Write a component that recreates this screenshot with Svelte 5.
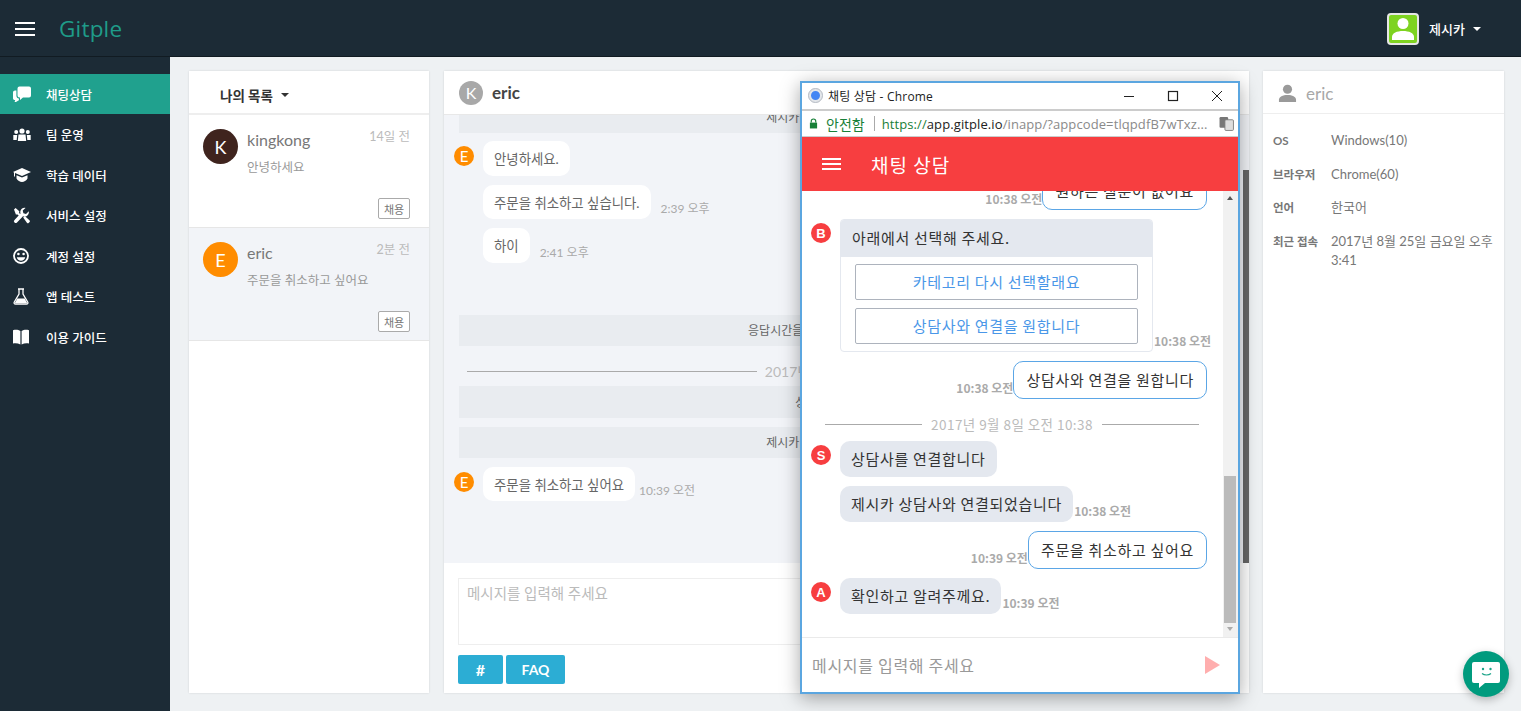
<script>
  const navItems = [
    { id: 'chat', label: '채팅상담' },
    { id: 'team', label: '팀 운영' },
    { id: 'learn', label: '학습 데이터' },
    { id: 'service', label: '서비스 설정' },
    { id: 'account', label: '계정 설정' },
    { id: 'test', label: '앱 테스트' },
    { id: 'guide', label: '이용 가이드' }
  ];

  const conversations = [
    { id: 'k', initial: 'K', name: 'kingkong', time: '14일 전', text: '안녕하세요', color: '#3f241e' },
    { id: 'e', initial: 'E', name: 'eric', time: '2분 전', text: '주문을 취소하고 싶어요', color: '#ff8c00', active: true }
  ];

  const details = [
    { label: 'OS', value: 'Windows(10)' },
    { label: '브라우저', value: 'Chrome(60)' },
    { label: '언어', value: '한국어' },
    { label: '최근 접속', value: '2017년 8월 25일 금요일 오후 3:41' }
  ];
</script>

<div class="page">
  <header class="topbar">
    <div class="brand">
      <span class="burger"><i></i><i></i><i></i></span>
      <span class="logo">Gitple</span>
    </div>
    <div class="me">
      <span class="me-pic">
        <svg viewBox="0 0 28 28" width="28" height="28"><circle cx="14" cy="8.5" r="5.5" fill="#fff"/><path d="M3 25v-3c0-4 5-6 11-6s11 2 11 6v3z" fill="#fff"/></svg>
      </span>
      <span class="me-name">제시카</span>
      <span class="caret light"></span>
    </div>
  </header>

  <div class="body">
    <nav class="sidebar">
      {#each navItems as item, i}
        <div class="nav-item" class:active={i === 0}>
          <span class="nav-icon">
            {#if item.id === 'chat'}
              <svg viewBox="0 0 18 16" width="18" height="16"><path d="M6.5 0.500h9.500a2 2 0 0 1 2 2v7a2 2 0 0 1-2 2H10l-3 2.500V11.500h-.5a2 2 0 0 1-2-2v-7a2 2 0 0 1 2-2z" fill="#fff"/><path d="M3.400 4.500v5.300c0 1.600 1.100 2.700 2.500 2.700v1.800l-2.900 1.700H1.600l.6-1.900H1.800C.8 14.100 0 13.300 0 12.300V6.500c0-1.100.9-2 2-2z" fill="#fff"/></svg>
            {:else if item.id === 'team'}
              <svg viewBox="0 0 18 14" width="18" height="14" fill="#fff"><circle cx="9" cy="3" r="2.600"/><path d="M5.500 6.500h7l.7 6.500H4.800z"/><circle cx="3.200" cy="4" r="2"/><path d="M.3 7h3.900l-.5 5H.3z"/><circle cx="14.800" cy="4" r="2"/><path d="M13.800 7h3.900v5h-3.400z"/></svg>
            {:else if item.id === 'learn'}
              <svg viewBox="0 0 18 14" width="18" height="14" fill="#fff"><path d="M9 0l9 4-9 4-7-3.100V8.500H1V4.400L0 4z"/><path d="M3.500 7.200L9 9.600l5.500-2.400v3.300C13.300 12.500 11 14 9 14s-4.300-1.500-5.500-3.500z"/></svg>
            {:else if item.id === 'service'}
              <svg viewBox="0 0 17 17" width="17" height="17" fill="#fff"><path d="M1.500 15.500a1.800 1.800 0 0 0 2.500 0l6-6.300c2.200.8 4.600-.2 5.500-2.300.4-.9.500-1.800.3-2.700l-2.800 2.700-2.600-.7-.7-2.600L12.500.9C10 .4 7.700 2 7.300 4.400c-.1.700 0 1.500.2 2.200l-6 6.300a1.800 1.800 0 0 0 0 2.600z"/><path d="M1 2.500L2.600 1l3.700 3.200-.2 1.800 2 2-1.500 1.500-2-2-1.700.1zM10.200 10.500l1.600-1.600 4.600 4.400a1.300 1.300 0 0 1 0 1.900l-.6.600a1.300 1.300 0 0 1-1.900 0z"/></svg>
            {:else if item.id === 'account'}
              <svg viewBox="0 0 16 16" width="16" height="16"><circle cx="8" cy="8" r="7" fill="none" stroke="#fff" stroke-width="1.800"/><circle cx="5.400" cy="6" r="1.300" fill="#fff"/><circle cx="10.600" cy="6" r="1.300" fill="#fff"/><path d="M3.800 9.200h8.400c-.3 2.200-2.100 3.600-4.200 3.600s-3.900-1.400-4.200-3.600z" fill="#fff"/></svg>
            {:else if item.id === 'test'}
              <svg viewBox="0 0 16 17" width="16" height="17"><path d="M5 1h6M6 1v5L1.300 14c-.6 1 0 2.200 1.200 2.200h11c1.200 0 1.800-1.200 1.200-2.200L10 6V1" fill="none" stroke="#fff" stroke-width="1.300"/><path d="M4.300 10.500h7.400l2.300 4.300c.2.400-.1.700-.5.700H2.500c-.4 0-.7-.3-.5-.7z" fill="#fff"/></svg>
            {:else}
              <svg viewBox="0 0 16 16" width="16" height="16" fill="#fff"><path d="M0 1.200C2.600.4 5.400.6 7.400 2v13.500C5.200 14.200 2.600 13.800 0 14.400z"/><path d="M16 1.200c-2.600-.8-5.400-.6-7.400.8v13.500c2.200-1.300 4.800-1.700 7.400-1.100z"/></svg>
            {/if}
          </span>
          <span>{item.label}</span>
        </div>
      {/each}
    </nav>

    <main class="content">
      <section class="card list">
        <div class="list-head">나의 목록 <span class="caret"></span></div>
        {#each conversations as c}
          <div class="conv" class:active={c.active}>
            <span class="conv-pic" style="background:{c.color}">{c.initial}</span>
            <div class="conv-main">
              <div class="conv-top">
                <span class="conv-name">{c.name}</span>
                <span class="conv-time">{c.time}</span>
              </div>
              <div class="conv-text">{c.text}</div>
              <div class="conv-foot"><span class="take">채용</span></div>
            </div>
          </div>
        {/each}
      </section>

      <section class="card chat">
        <div class="chat-head">
          <span class="head-pic">K</span>
          <span class="head-name">eric</span>
        </div>
        <div class="chat-log">
          <div class="band">제시카 상담사와 연결되었습니다</div>
          <div class="msg lead"><span class="dot">E</span><div class="bubble">안녕하세요.</div></div>
          <div class="msg"><div class="bubble">주문을 취소하고 싶습니다.</div><span class="stamp">2:39 오후</span></div>
          <div class="msg"><div class="bubble">하이</div><span class="stamp">2:41 오후</span></div>
          <div class="band timeout">응답시간을 초과해 상담사를 연결합니다</div>
          <div class="date-line"><i></i><span>2017년 9월 8일 오전 10:38</span><i></i></div>
          <div class="band">상담사를 연결합니다</div>
          <div class="band">제시카 상담사와 연결되었습니다</div>
          <div class="msg lead"><span class="dot">E</span><div class="bubble">주문을 취소하고 싶어요</div><span class="stamp tight">10:39 오전</span></div>
          <span class="log-scroll"></span>
        </div>
        <div class="composer">
          <div class="composer-box">메시지를 입력해 주세요</div>
          <div class="composer-btns">
            <span class="tool hash">#</span>
            <span class="tool faq">FAQ</span>
          </div>
        </div>
      </section>

      <section class="card info">
        <div class="info-head">
          <svg viewBox="0 0 20 20" width="19" height="19" fill="#9a9a9a"><circle cx="10" cy="5.500" r="4.800"/><path d="M1 19v-2.500c0-3 4-5 9-5s9 2 9 5V19z"/></svg>
          <span>eric</span>
        </div>
        <dl class="info-list">
          {#each details as d}
            <dt>{d.label}</dt>
            <dd>{d.value}</dd>
          {/each}
        </dl>
      </section>
    </main>
  </div>

  <!-- floating browser window -->
  <div class="popup">
    <div class="win-title">
      <span class="fav"></span>
      <span class="win-name">채팅 상담 - Chrome</span>
      <div class="win-ctrls">
        <svg viewBox="0 0 12 12" width="12" height="12"><path d="M1 6.500h10" stroke="#222" stroke-width="1"/></svg>
        <svg viewBox="0 0 12 12" width="12" height="12"><rect x="1.500" y="1.500" width="9" height="9" fill="none" stroke="#222" stroke-width="1.200"/></svg>
        <svg viewBox="0 0 12 12" width="12" height="12"><path d="M1 1l10 10M11 1L1 11" stroke="#222" stroke-width="1"/></svg>
      </div>
    </div>
    <div class="win-addr">
      <svg class="lock" viewBox="0 0 10 12" width="9" height="11"><path d="M2.500 5V3.500a2.500 2.500 0 0 1 5 0V5" fill="none" stroke="#188038" stroke-width="1.300"/><rect x="1" y="5" width="8" height="6.500" fill="#188038"/></svg>
      <span class="secure">안전함</span>
      <span class="addr-sep"></span>
      <span class="url"><b>https://</b><em>app.gitple.io</em>/inapp/?appcode=tlqpdfB7wTxz...</span>
      <svg class="translate" viewBox="0 0 14 14" width="15" height="15"><rect x="0.500" y="1" width="8" height="10" rx="1" fill="#777"/><rect x="5.500" y="3.500" width="8" height="10" rx="1" fill="#ddd" stroke="#777" stroke-width="0.800"/></svg>
    </div>
    <div class="bot-head">
      <span class="bot-burger"><i></i><i></i><i></i></span>
      <span class="bot-title">채팅 상담</span>
    </div>
    <div class="bot-main">
      <div class="bot-log">
        <div class="b-row mine"><span class="b-stamp">10:38 오전</span><div class="b-bubble out">원하는 질문이 없어요</div></div>

        <div class="b-row">
          <span class="b-dot">B</span>
          <div class="pick">
            <div class="pick-head">아래에서 선택해 주세요.</div>
            <div class="pick-body">
              <div class="pick-btn">카테고리 다시 선택할래요</div>
              <div class="pick-btn">상담사와 연결을 원합니다</div>
            </div>
          </div>
          <span class="b-stamp after">10:38 오전</span>
        </div>

        <div class="b-row mine"><span class="b-stamp">10:38 오전</span><div class="b-bubble out">상담사와 연결을 원합니다</div></div>

        <div class="b-date"><i></i><span>2017년 9월 8일 오전 10:38</span><i></i></div>

        <div class="b-row"><span class="b-dot">S</span><div class="b-bubble">상담사를 연결합니다</div></div>
        <div class="b-row"><div class="b-bubble">제시카 상담사와 연결되었습니다</div><span class="b-stamp after">10:38 오전</span></div>
        <div class="b-row mine"><span class="b-stamp">10:39 오전</span><div class="b-bubble out">주문을 취소하고 싶어요</div></div>
        <div class="b-row"><span class="b-dot">A</span><div class="b-bubble">확인하고 알려주께요.</div><span class="b-stamp after">10:39 오전</span></div>
      </div>
      <div class="bot-scroll">
        <span class="arrow up"></span>
        <span class="thumb"></span>
        <span class="arrow down"></span>
      </div>
    </div>
    <div class="bot-input">
      <span>메시지를 입력해 주세요</span>
      <span class="send"></span>
    </div>
  </div>

  <div class="fab">
    <svg viewBox="0 0 30 30" width="30" height="30">
      <path d="M3 2h24a2 2 0 0 1 2 2v17a2 2 0 0 1-2 2H14l-6 5v-5H3a2 2 0 0 1-2-2V4a2 2 0 0 1 2-2z" fill="#fff"/>
      <circle cx="12" cy="9" r="1.200" fill="#1aa388"/>
      <circle cx="19.500" cy="9" r="1.200" fill="#1aa388"/>
      <path d="M11 13.500c2.500 2 6.500 2 9 0" fill="none" stroke="#1aa388" stroke-width="1.200"/>
    </svg>
  </div>
</div>

<style>
  :global(body) {
    margin: 0;
    background: #eef1f3;
  }

  .page {
    position: relative;
    width: 1521px;
    height: 711px;
    overflow: hidden;
    display: flex;
    flex-direction: column;
    font-family: Lato, "Noto Sans CJK KR", sans-serif;
    color: #777;
    background: #eef1f3;
  }

  .topbar {
    height: 56px;
    flex-shrink: 0;
    display: flex;
    align-items: center;
    justify-content: space-between;
    background: #1c2b36;
    border-bottom: 1px solid #111b22;
  }

  .brand {
    display: flex;
    align-items: center;
    padding-left: 15px;
  }

  .burger {
    display: flex;
    flex-direction: column;
    gap: 4px;
    width: 20px;
    margin-top: 2px;
  }

  .burger i {
    display: block;
    height: 2px;
    background: #fff;
  }

  .logo {
    margin-left: 24px;
    font-size: 22.500px;
    color: #1f9c89;
    font-family: "Open Sans", sans-serif;
    letter-spacing: 0.2px;
  }

  .me {
    display: flex;
    align-items: center;
    padding-right: 40px;
    padding-top: 1px;
  }

  .me-pic {
    width: 28px;
    height: 28px;
    border: 2px solid #e6e6e6;
    border-radius: 4px;
    background: #7ed321;
    overflow: hidden;
    display: flex;
  }

  .me-name {
    margin-left: 10px;
    font-size: 13px;
    font-weight: 500;
    color: #fff;
  }

  .caret {
    display: inline-block;
    width: 0;
    height: 0;
    margin-left: 4px;
    vertical-align: middle;
    border-left: 4px solid transparent;
    border-right: 4px solid transparent;
    border-top: 4px solid #333;
  }

  .caret.light {
    margin-left: 8px;
    border-top-color: #fff;
  }

  .body {
    flex: 1;
    min-height: 0;
    display: flex;
  }

  .sidebar {
    width: 170px;
    flex-shrink: 0;
    padding-top: 17px;
    box-sizing: border-box;
    background: #1c2b36;
  }

  .nav-item {
    height: 40.500px;
    display: flex;
    align-items: center;
    font-size: 12.500px;
    font-weight: 500;
    color: #fff;
  }

  .nav-item.active {
    height: 40px;
    margin-bottom: 0.500px;
    background: #20a18e;
  }

  .nav-icon {
    width: 46px;
    padding-left: 13px;
    box-sizing: border-box;
    display: flex;
    align-items: center;
  }

  .content {
    flex: 1;
    min-width: 0;
    display: flex;
    gap: 14px;
    padding: 14px 17px 18px 19px;
  }

  .card {
    background: #fff;
    box-shadow: 0 0 2px rgba(0, 0, 0, 0.12);
    display: flex;
    flex-direction: column;
    min-height: 0;
  }

  .list {
    width: 240px;
    margin-right: 1px;
    flex-shrink: 0;
  }

  .list-head {
    height: 37px;
    padding-top: 5px;
    flex-shrink: 0;
    display: flex;
    align-items: center;
    padding-left: 31px;
    gap: 4px;
    font-size: 13.500px;
    font-weight: 700;
    color: #333;
    border-bottom: 2px solid #eee;
  }

  .conv {
    height: 112px;
    flex-shrink: 0;
    display: flex;
    padding: 0 19px 0 14px;
    border-bottom: 1px solid #e6e6e6;
  }

  .conv.active {
    background: #f2f4f8;
  }

  .conv-pic {
    width: 35px;
    height: 35px;
    margin-top: 14px;
    border-radius: 50%;
    flex-shrink: 0;
    display: flex;
    align-items: center;
    justify-content: center;
    font-size: 18px;
    color: #fff;
  }

  .conv-main {
    flex: 1;
    min-width: 0;
    margin-left: 9px;
    display: flex;
    flex-direction: column;
  }

  .conv-top {
    display: flex;
    justify-content: space-between;
    margin-top: 14px;
  }

  .conv-name {
    font-size: 16px;
    line-height: 22px;
    color: #777;
  }

  .conv-time {
    font-size: 12.500px;
    line-height: 15px;
    color: #bbb;
  }

  .conv-text {
    margin-top: 7px;
    font-size: 12.500px;
    line-height: 19px;
    color: #999;
  }

  .conv-foot {
    margin-top: 21px;
    display: flex;
    justify-content: flex-end;
  }

  .take {
    width: 30px;
    height: 19px;
    display: flex;
    align-items: center;
    justify-content: center;
    border: 1px solid #aaa;
    border-radius: 2px;
    background: #fff;
    font-size: 11px;
    color: #777;
  }

  .chat {
    flex: 1;
    min-width: 0;
  }

  .chat-head {
    height: 43px;
    flex-shrink: 0;
    display: flex;
    align-items: center;
    gap: 9px;
    padding-left: 15px;
    border-bottom: 1px solid #e8e8e8;
    box-shadow: 0 1px 1px rgba(0, 0, 0, 0.04);
    position: relative;
  }

  .head-pic {
    width: 24px;
    height: 24px;
    border-radius: 50%;
    background: #a8a8a8;
    color: #fff;
    display: flex;
    align-items: center;
    justify-content: center;
    font-size: 16px;
  }

  .head-name {
    font-size: 17px;
    font-weight: 700;
    color: #444;
  }

  .chat-log {
    position: relative;
    flex: 1;
    min-height: 0;
    overflow: hidden;
    display: flex;
    flex-direction: column;
    justify-content: flex-end;
    padding-bottom: 62px;
    background: #f2f4f8;
  }

  .band {
    flex-shrink: 0;
    height: 31.500px;
    padding-bottom: 1px;
    box-sizing: border-box;
    margin: 9px 15px 0;
    display: flex;
    align-items: center;
    justify-content: center;
    background: #e9ecf0;
    font-size: 12px;
    color: #666;
  }

  .band.timeout {
    margin-top: 52px;
  }

  .msg {
    flex-shrink: 0;
    display: flex;
    align-items: flex-end;
    margin: 9px 0 0 39px;
  }

  .band + .msg {
    margin-top: 8.500px;
  }

  .msg.lead {
    position: relative;
  }

  .dot {
    position: absolute;
    left: -29px;
    top: 5px;
    width: 20px;
    height: 20px;
    border-radius: 50%;
    background: #ff8c00;
    color: #fff;
    font-size: 15px;
    display: flex;
    align-items: center;
    justify-content: center;
  }

  .bubble {
    height: 34.500px;
    display: flex;
    align-items: center;
    padding: 0 11px;
    border-radius: 10px;
    background: #fff;
    font-size: 13.400px;
    color: #666;
  }

  .stamp {
    margin: 0 0 3px 10px;
    font-size: 12px;
    color: #aaa;
  }

  .stamp.tight {
    margin-left: 4px;
  }

  .date-line {
    flex-shrink: 0;
    display: flex;
    align-items: center;
    gap: 8px;
    height: 20px;
    margin: 15px 23px 0;
    font-size: 14px;
    color: #bbb;
  }

  .date-line i {
    flex: 1;
    height: 1px;
    background: #aaa;
  }

  .date-line + .band {
    margin-top: 5px;
  }

  .log-scroll {
    position: absolute;
    right: 0;
    top: 55px;
    bottom: 0;
    width: 6px;
    background: #666;
  }

  .composer {
    height: 130px;
    flex-shrink: 0;
    padding: 15px 15px 0 14px;
    box-sizing: border-box;
  }

  .composer-box {
    height: 67px;
    box-sizing: border-box;
    padding: 3px 8px;
    border: 1px solid #eee;
    font-size: 14.500px;
    color: #bbb;
  }

  .composer-btns {
    display: flex;
    gap: 3px;
    margin-top: 10px;
  }

  .tool {
    height: 29px;
    display: flex;
    align-items: center;
    justify-content: center;
    border-radius: 2px;
    background: #2cadd4;
    color: #fff;
    font-size: 14px;
    font-weight: 700;
  }

  .hash {
    width: 45px;
    font-size: 16px;
  }

  .faq {
    width: 59px;
  }

  .info {
    width: 241px;
    flex-shrink: 0;
  }

  .info-head {
    height: 40px;
    padding-top: 2px;
    flex-shrink: 0;
    display: flex;
    align-items: center;
    gap: 9px;
    padding-left: 15px;
    border-bottom: 1px solid #eee;
    font-size: 17px;
    color: #a8a8a8;
  }

  .info-list {
    margin: 17px 0 0;
    padding: 0 10px;
    display: grid;
    grid-template-columns: 58px 1fr;
    row-gap: 14.500px;
    font-size: 13px;
    line-height: 19px;
  }

  dt {
    font-size: 11.500px;
    font-weight: 700;
    color: #777;
  }

  dd {
    margin: 0;
    color: #777;
  }

  /* popup browser window */
  .popup {
    position: absolute;
    left: 800px;
    top: 81px;
    width: 440px;
    height: 613px;
    box-sizing: border-box;
    border: 2px solid #5ba6e0;
    background: #fff;
    box-shadow: 0 4px 18px rgba(0, 0, 0, 0.35);
    display: flex;
    flex-direction: column;
    font-family: "Noto Sans CJK KR", sans-serif;
  }

  .win-title {
    height: 25px;
    padding-bottom: 1px;
    flex-shrink: 0;
    display: flex;
    align-items: center;
    padding-left: 6px;
    font-size: 12px;
    color: #222;
    border-bottom: 2px solid #ccc;
  }

  .fav {
    width: 9px;
    height: 9px;
    border: 3px solid #e3e6ea;
    border-radius: 50%;
    background: #4285f4;
    outline: 1px solid #b9bec6;
    outline-offset: -1px;
  }

  .win-name {
    margin-left: 5px;
    letter-spacing: 0.2px;
    font-family: "Open Sans", "Noto Sans CJK KR", sans-serif;
  }

  .win-ctrls {
    margin-left: auto;
    display: flex;
    gap: 32px;
    padding-right: 15px;
  }

  .win-addr {
    height: 25px;
    flex-shrink: 0;
    display: flex;
    align-items: center;
    padding-left: 7px;
    border-bottom: 1px solid #ccc;
    font-family: "Open Sans", "Noto Sans CJK KR", sans-serif;
    white-space: nowrap;
    overflow: hidden;
  }

  .secure {
    margin-left: 8px;
    font-size: 14px;
    color: #188038;
  }

  .addr-sep {
    width: 1px;
    height: 15px;
    margin: 0 7px 0 9px;
    background: #aaa;
  }

  .url {
    color: #8a8a8a;
    font-size: 13px;
    letter-spacing: 0.1px;
  }

  .url b {
    font-weight: 400;
    color: #188038;
  }

  .url em {
    font-style: normal;
    color: #222;
  }

  .translate {
    margin-left: auto;
    margin-right: 4px;
    flex-shrink: 0;
  }

  .bot-head {
    height: 54px;
    flex-shrink: 0;
    display: flex;
    align-items: center;
    background: #f73e40;
    color: #fff;
    padding-left: 20px;
  }

  .bot-burger {
    display: flex;
    flex-direction: column;
    gap: 3px;
    width: 19px;
  }

  .bot-burger i {
    height: 2px;
    background: #fff;
  }

  .bot-title {
    margin-left: 30px;
    font-size: 19px;
    letter-spacing: 1px;
  }

  .bot-main {
    flex: 1;
    min-height: 0;
    display: flex;
  }

  .bot-log {
    flex: 1;
    min-width: 0;
    overflow: hidden;
    display: flex;
    flex-direction: column;
    justify-content: flex-end;
    padding: 0 16px 23px 9px;
  }

  .b-row {
    flex-shrink: 0;
    display: flex;
    align-items: flex-end;
    margin-top: 9px;
    position: relative;
    padding-left: 29px;
  }

  .b-row.mine {
    justify-content: flex-end;
    padding-left: 0;
  }

  .b-dot {
    position: absolute;
    left: 0;
    top: 4px;
    width: 20px;
    height: 20px;
    border-radius: 50%;
    background: #f73e40;
    color: #fff;
    font-size: 13px;
    font-weight: 700;
    font-family: "Liberation Sans", sans-serif;
    display: flex;
    align-items: center;
    justify-content: center;
  }

  .b-bubble {
    height: 36px;
    box-sizing: border-box;
    display: flex;
    align-items: center;
    padding: 0 11px 2px;
    border-radius: 10px;
    background: #e4e8ef;
    font-size: 15px;
    letter-spacing: 0.700px;
    color: #333;
    white-space: nowrap;
  }

  .b-bubble.out {
    height: 38px;
    padding: 0 12px 1px;
    background: #fff;
    border: 1px solid #5ba6e6;
  }

  .b-stamp {
    margin-bottom: 3px;
    font-size: 12px;
    font-weight: 700;
    color: #aaa;
    white-space: nowrap;
  }

  .b-stamp.after {
    margin-left: 1px;
  }

  .pick {
    width: 313px;
    flex-shrink: 0;
    box-sizing: border-box;
    border: 1px solid #e4e8ef;
    border-radius: 4px;
    overflow: hidden;
  }

  .pick-head {
    height: 37px;
    box-sizing: border-box;
    padding: 0 0 2px 11px;
    display: flex;
    align-items: center;
    background: #e4e8ef;
    font-size: 15px;
    letter-spacing: 0.700px;
    color: #333;
  }

  .pick-body {
    display: flex;
    flex-direction: column;
    gap: 8px;
    padding: 7px 14px;
  }

  .pick-btn {
    height: 36px;
    box-sizing: border-box;
    padding-bottom: 2px;
    display: flex;
    align-items: center;
    justify-content: center;
    border: 1px solid #adb3bd;
    border-radius: 2px;
    font-size: 15px;
    letter-spacing: 0.700px;
    color: #4a97e8;
  }

  .b-date {
    flex-shrink: 0;
    display: flex;
    align-items: center;
    gap: 9px;
    margin: 14px 8px 0 14px;
    height: 22px;
    font-size: 13.500px;
    letter-spacing: 0.450px;
    color: #bbb;
    white-space: nowrap;
  }

  .b-date i {
    flex: 1;
    height: 1px;
    background: #aaa;
  }

  .b-date + .b-row {
    margin-top: 6px;
  }

  .bot-scroll {
    position: relative;
    width: 15px;
    flex-shrink: 0;
    background: #f1f1f1;
  }

  .thumb {
    position: absolute;
    left: 1px;
    right: 2px;
    top: 285px;
    height: 147px;
    background: #bbb;
  }

  .arrow {
    position: absolute;
    left: 4px;
    width: 0;
    height: 0;
    border-left: 3.500px solid transparent;
    border-right: 3.500px solid transparent;
  }

  .arrow.up {
    top: 5px;
    border-bottom: 4px solid #555;
  }

  .arrow.down {
    bottom: 6px;
    border-top: 4px solid #aaa;
  }

  .bot-input {
    height: 54px;
    flex-shrink: 0;
    display: flex;
    align-items: center;
    justify-content: space-between;
    padding: 0 18px 0 10px;
    border-top: 1px solid #eaeaea;
    font-size: 16px;
    letter-spacing: 0.700px;
    color: #999;
  }

  .send {
    width: 0;
    height: 0;
    border-top: 9px solid transparent;
    border-bottom: 9px solid transparent;
    border-left: 15px solid #ffaeae;
  }

  .fab {
    position: absolute;
    left: 1463px;
    top: 651px;
    width: 46px;
    height: 46px;
    padding-top: 2px;
    box-sizing: border-box;
    border-radius: 50%;
    background: #009b7e;
    box-shadow: 0 3px 8px rgba(0, 0, 0, 0.25);
    display: flex;
    align-items: center;
    justify-content: center;
  }
</style>
